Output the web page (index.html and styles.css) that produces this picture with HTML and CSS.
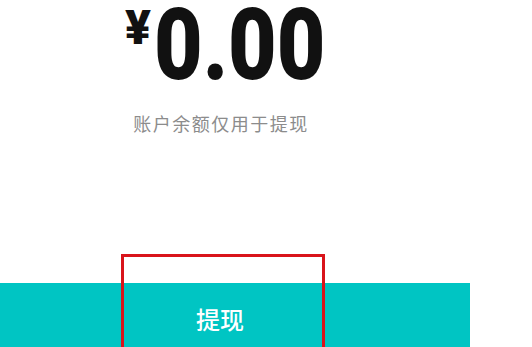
FILE: index.html
```html
<!DOCTYPE html>
<html lang="zh-CN">
<head>
    <meta charset="UTF-8">
    <meta name="viewport" content="width=device-width, initial-scale=1.0">
    <title>余额</title>
    <link rel="stylesheet" href="styles.css">
</head>
<body>
    <div class="page">
        <div class="balance">
            <div class="amount"><span class="currency">¥</span><span class="value">0.00</span></div>
            <div class="note">账户余额仅用于提现</div>
        </div>
        <button class="withdraw">提现</button>
        <div class="highlight"></div>
    </div>
</body>
</html>
```

FILE: styles.css
```css
body {
    margin: 0;
    padding: 0;
    background-color: #ffffff;
    font-family: 'Noto Sans', 'Noto Sans CJK SC', sans-serif;
    overflow: hidden;
}
.page {
    position: relative;
    width: 532px;
    height: 347px;
    overflow: hidden;
}
.balance {
    width: 442px;
    display: flex;
    flex-direction: column;
    align-items: center;
}
.amount {
    display: flex;
    align-items: flex-start;
    padding-left: 10px;
    color: #111111;
    font-family: 'Roboto', 'Liberation Sans', sans-serif;
    font-weight: 900;
}
.currency {
    font-size: 48px;
    line-height: 56px;
    margin-right: 3px;
}
.value {
    display: block;
    font-size: 100px;
    line-height: 100px;
    margin-top: -5px;
    transform: scaleX(0.84);
    transform-origin: left top;
    margin-right: -31px;
}
.note {
    margin-top: 15px;
    font-size: 18px;
    letter-spacing: 1.5px;
    color: #8c8c8c;
    font-family: 'Noto Sans CJK SC', sans-serif;
}
.withdraw {
    display: block;
    margin-top: 147px;
    width: 470px;
    height: 64px;
    padding: 6px 0 0 0;
    border: none;
    background-color: #00c5c3;
    color: #ffffff;
    font-size: 24px;
    font-family: 'Noto Sans CJK SC', sans-serif;
    font-weight: 500;
    text-indent: -30px;
}
.highlight {
    position: absolute;
    left: 121px;
    top: 254px;
    width: 198px;
    height: 110px;
    border: 3px solid #d9141b;
}
```
